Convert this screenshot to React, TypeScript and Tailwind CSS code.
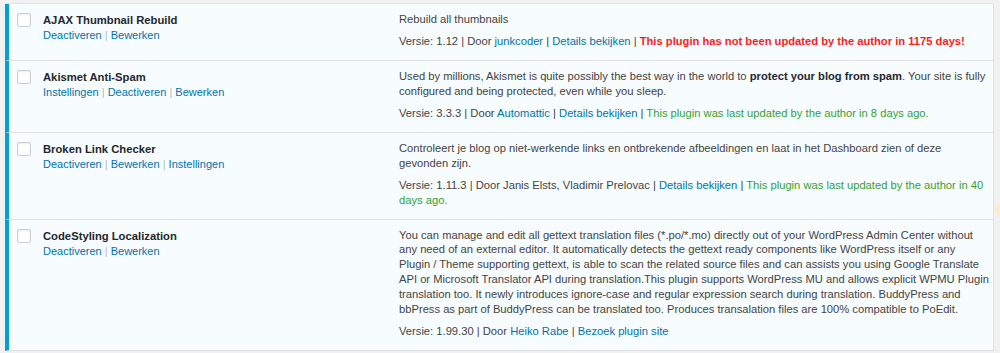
import React from "react";

type Plugin = {
  name: string;
  actions: string[];
  description: React.ReactNode[];
  meta: React.ReactNode[];
};

const Link: React.FC<{ children: React.ReactNode }> = ({ children }) => (
  <a className="text-[#0073aa]">{children}</a>
);

const Sep = () => <span className="text-[#444]"> | </span>;

const PLUGINS: Plugin[] = [
  {
    name: "AJAX Thumbnail Rebuild",
    actions: ["Deactiveren", "Bewerken"],
    description: ["Rebuild all thumbnails"],
    meta: [
      <>
        Versie: 1.12
        <Sep />
        Door <Link>junkcoder</Link>
        <Sep />
        <Link>Details bekijken</Link>
        <Sep />
        <span className="font-bold text-[#ff1a1a]">
          This plugin has not been updated by the author in 1175 days!
        </span>
      </>,
    ],
  },
  {
    name: "Akismet Anti-Spam",
    actions: ["Instellingen", "Deactiveren", "Bewerken"],
    description: [
      <>
        Used by millions, Akismet is quite possibly the best way in the world to{" "}
        <strong className="font-bold text-[#23282d]">protect your blog from spam</strong>. Your
        site is fully
      </>,
      "configured and being protected, even while you sleep.",
    ],
    meta: [
      <>
        Versie: 3.3.3
        <Sep />
        Door <Link>Automattic</Link>
        <Sep />
        <Link>Details bekijken</Link>
        <Sep />
        <span className="text-[#34a034]">
          This plugin was last updated by the author in 8 days ago.
        </span>
      </>,
    ],
  },
  {
    name: "Broken Link Checker",
    actions: ["Deactiveren", "Bewerken", "Instellingen"],
    description: [
      "Controleert je blog op niet-werkende links en ontbrekende afbeeldingen en laat in het Dashboard zien of deze",
      "gevonden zijn.",
    ],
    meta: [
      <>
        Versie: 1.11.3
        <Sep />
        Door Janis Elsts, Vladimir Prelovac
        <Sep />
        <Link>Details bekijken</Link>
        <Sep />
        <span className="text-[#34a034]">
          This plugin was last updated by the author in 40
        </span>
      </>,
      <span className="text-[#34a034]">days ago.</span>,
    ],
  },
  {
    name: "CodeStyling Localization",
    actions: ["Deactiveren", "Bewerken"],
    description: [
      "You can manage and edit all gettext translation files (*.po/*.mo) directly out of your WordPress Admin Center without",
      "any need of an external editor. It automatically detects the gettext ready components like WordPress itself or any",
      "Plugin / Theme supporting gettext, is able to scan the related source files and can assists you using Google Translate",
      "API or Microsoft Translator API during translation.This plugin supports WordPress MU and allows explicit WPMU Plugin",
      "translation too. It newly introduces ignore-case and regular expression search during translation. BuddyPress and",
      "bbPress as part of BuddyPress can be translated too. Produces transalation files are 100% compatible to PoEdit.",
    ],
    meta: [
      <>
        Versie: 1.99.30
        <Sep />
        Door <Link>Heiko Rabe</Link>
        <Sep />
        <Link>Bezoek plugin site</Link>
      </>,
    ],
  },
];

const PluginRow: React.FC<{ plugin: Plugin }> = ({ plugin }) => (
  <div className="flex border-b border-[#e1e1e1] border-l-4 border-l-[#00a0d2] bg-[#f7fcfe]">
    <div className="w-[34px] shrink-0 pl-[8px] pt-[9px]">
      <div className="h-[14px] w-[14px] rounded-[2px] border border-[#c9cdd1] bg-white shadow-[inset_0_1px_2px_rgba(0,0,0,0.08)]" />
    </div>
    <div className="w-[356px] shrink-0 pt-[8px]">
      <div className="text-[11.25px] font-bold leading-[16px] text-[#23282d]">{plugin.name}</div>
      <div className="text-[11px] leading-[14.8px] text-[#0073aa]">
        {plugin.actions.map((action, i) => (
          <React.Fragment key={action}>
            {i > 0 && <span className="text-[#b4b9be]"> | </span>}
            <a>{action}</a>
          </React.Fragment>
        ))}
      </div>
    </div>
    <div className="flex-1 pt-[8px] pb-[11px] pr-[8px] text-[11.2px] leading-[14.8px] text-[#444]">
      <p className="whitespace-nowrap">
        {plugin.description.map((line, i) => (
          <React.Fragment key={i}>
            {i > 0 && <br />}
            {line}
          </React.Fragment>
        ))}
      </p>
      <p className="mt-[7.5px] whitespace-nowrap">
        {plugin.meta.map((line, i) => (
          <React.Fragment key={i}>
            {i > 0 && <br />}
            {line}
          </React.Fragment>
        ))}
      </p>
    </div>
  </div>
);

export default function App() {
  return (
    <div className="relative h-[353px] overflow-hidden bg-[#f1f1f1] pt-[3px] pl-[5px] pr-[6px] font-['Liberation_Sans',Arial,sans-serif]">
      <div className="border-t border-r border-[#e1e1e1]">
        {PLUGINS.map((plugin) => (
          <PluginRow key={plugin.name} plugin={plugin} />
        ))}
      </div>
      {/* half-hidden badge at the right edge */}
      <div className="absolute left-[995px] top-[203px] h-[14px] w-[14px] rounded-full bg-[#fbeccb]" />
    </div>
  );
}
